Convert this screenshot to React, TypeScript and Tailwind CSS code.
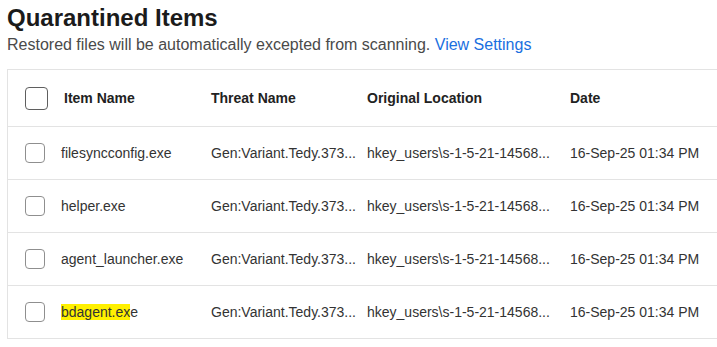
const rows = [
  { name: "filesyncconfig.exe" },
  { name: "helper.exe" },
  { name: "agent_launcher.exe" },
  { name: "bdagent.exe", mark: "bdagent.ex" },
];

const Checkbox = ({ big }: { big?: boolean }) => (
  <div
    className={
      big
        ? "w-[23px] h-[23px] rounded-[4px] border border-[#5f5f5f] bg-white shrink-0"
        : "w-[20px] h-[20px] rounded-[4px] border border-[#8f8f8f] bg-white shrink-0"
    }
  />
);

export default function App() {
  return (
    <div className="w-[717px] h-[347px] overflow-hidden bg-white font-['Liberation_Sans',Arial,sans-serif] text-[#2b2b2b]">
      {/* heading */}
      <div className="pl-[7px] pt-[2px]">
        <h1 className="text-[24px] leading-[32px] font-bold text-[#1b1b1b]">Quarantined Items</h1>
        <p className="text-[16px] leading-[20px] text-[#4a4a4a] mt-[1px]">
          Restored files will be automatically excepted from scanning.{" "}
          <span className="text-[#1a6fe0]">View Settings</span>
        </p>
      </div>

      {/* table */}
      <div className="ml-[7px] mt-[14px] border-l border-t border-[#e3e3e3]">
        <div className="grid grid-cols-[203px_156px_203px_1fr] h-[57px] items-center border-b border-[#e3e3e3] text-[14px] font-semibold text-[#222]">
          <div className="flex items-center gap-[16px] pl-[17px]">
            <Checkbox big />
            <span>Item Name</span>
          </div>
          <div>Threat Name</div>
          <div>Original Location</div>
          <div>Date</div>
        </div>
        {rows.map((r) => (
          <div
            key={r.name}
            className="grid grid-cols-[203px_156px_203px_1fr] h-[53px] items-center border-b border-[#e3e3e3] text-[14px] text-[#333]"
          >
            <div className="flex items-center gap-[16px] pl-[17px]">
              <Checkbox />
              <span>
                {r.mark ? (
                  <>
                    <span className="bg-[#fff000]">{r.mark}</span>
                    {r.name.slice(r.mark.length)}
                  </>
                ) : (
                  r.name
                )}
              </span>
            </div>
            <div>Gen:Variant.Tedy.373...</div>
            <div>hkey_users\s-1-5-21-14568...</div>
            <div>16-Sep-25 01:34 PM</div>
          </div>
        ))}
      </div>
    </div>
  );
}
